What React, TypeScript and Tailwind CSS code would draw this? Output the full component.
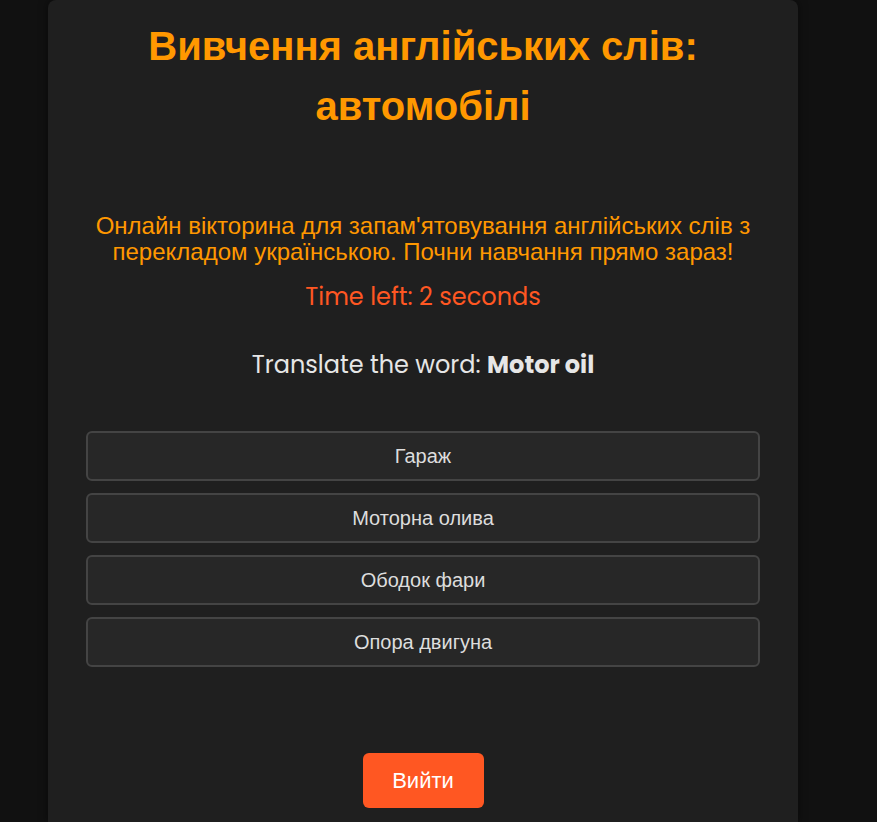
import React from "react";

const options = ["Гараж", "Моторна олива", "Ободок фари", "Опора двигуна"];

export default function App() {
  return (
    <div className="min-h-[822px] bg-[#111111] font-['Liberation_Sans',Arial,sans-serif]">
      <div className="ml-[48px] w-[750px] min-h-[822px] rounded-t-lg bg-[#1f1f1f] pt-[16px] shadow-[0_0_10px_rgba(0,0,0,0.5)]">
        <h1 className="mx-auto w-[600px] text-center text-[40px] font-bold leading-[60px] text-[#ff9800]">
          Вивчення англійських слів: автомобілі
        </h1>

        <p className="mt-[77px] px-[30px] text-center text-[24px] leading-[26px] text-[#ff9800]">
          Онлайн вікторина для запам'ятовування англійських слів з перекладом українською. Почни навчання прямо зараз!
        </p>

        <p className="mt-[15px] text-center font-['Poppins','Inter',sans-serif] text-[24px] leading-[33px] text-[#ff5722]">
          Time left: 2 seconds
        </p>

        <p className="mt-[35px] text-center font-['Poppins','Inter',sans-serif] text-[24px] leading-[33px] text-[#e6e6e6]">
          Translate the word: <span className="font-bold">Motor oil</span>
        </p>

        <div className="mx-[38px] mt-[50px] flex flex-col gap-[12px]">
          {options.map((opt) => (
            <button
              key={opt}
              className="h-[50px] w-full rounded-md border-2 border-[#444444] bg-[#272727] text-[20px] text-[#dddddd]"
            >
              {opt}
            </button>
          ))}
        </div>

        <div className="mt-[86px] flex justify-center">
          <button className="h-[55px] w-[121px] rounded-md bg-[#ff5722] text-[22px] text-white">
            Вийти
          </button>
        </div>
      </div>
    </div>
  );
}
